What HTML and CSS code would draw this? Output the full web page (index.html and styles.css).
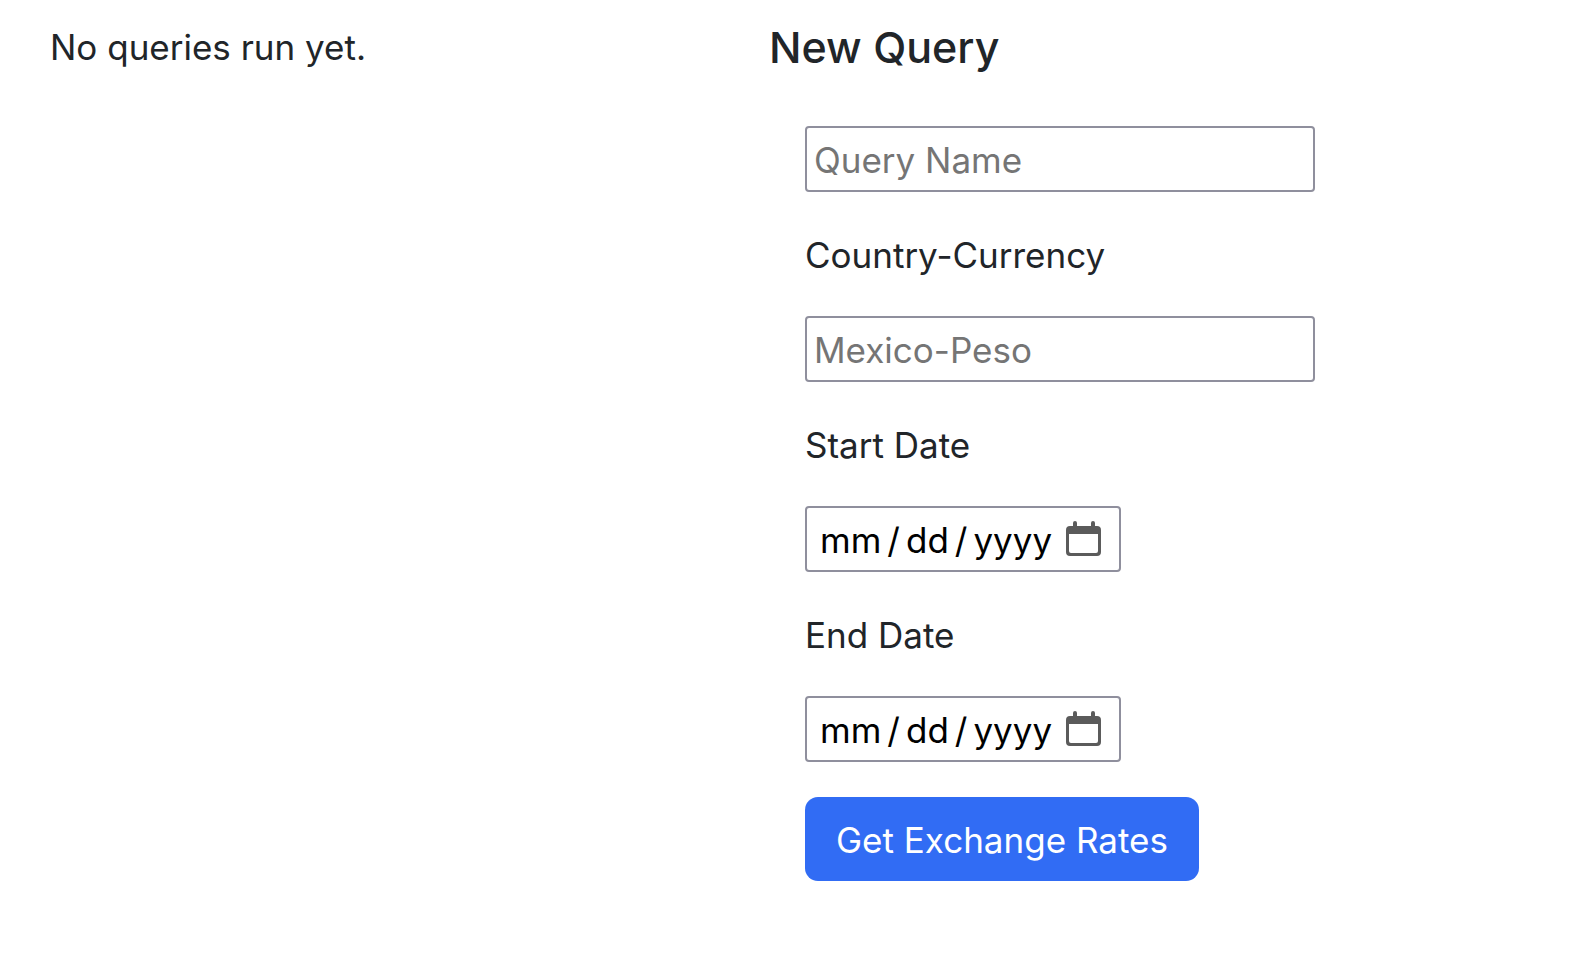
FILE: index.html
```html
<!DOCTYPE html>
<html lang="en-US">
<head>
  <meta charset="utf-8">
  <title>Exchange Rates</title>
  <link rel="stylesheet" href="styles.css">
</head>
<body>
  <main class="page">
    <section class="history">
      <p class="history-empty">No queries run yet.</p>
    </section>
    <section class="query">
      <h1 class="query-title">New Query</h1>
      <form class="query-form">
        <input class="field" type="text" name="name" placeholder="Query Name" aria-label="Query Name">
        <label class="label" for="currency">Country-Currency</label>
        <input class="field" id="currency" type="text" name="currency" placeholder="Mexico-Peso">
        <label class="label" for="start">Start Date</label>
        <div class="date">
          <input class="date-input" id="start" type="date" name="start">
          <svg class="date-icon" viewBox="0 0 35 35" aria-hidden="true">
            <path fill="#5b5b5b" fill-rule="evenodd" d="M7 2a2 2 0 0 1 4 0v3h14V2a2 2 0 0 1 4 0v3h2a4 4 0 0 1 4 4v22a4 4 0 0 1-4 4H4a4 4 0 0 1-4-4V9a4 4 0 0 1 4-4h3zM3 13v17a2 2 0 0 0 2 2h25a2 2 0 0 0 2-2V13z"/>
          </svg>
        </div>
        <label class="label" for="end">End Date</label>
        <div class="date">
          <input class="date-input" id="end" type="date" name="end">
          <svg class="date-icon" viewBox="0 0 35 35" aria-hidden="true">
            <path fill="#5b5b5b" fill-rule="evenodd" d="M7 2a2 2 0 0 1 4 0v3h14V2a2 2 0 0 1 4 0v3h2a4 4 0 0 1 4 4v22a4 4 0 0 1-4 4H4a4 4 0 0 1-4-4V9a4 4 0 0 1 4-4h3zM3 13v17a2 2 0 0 0 2 2h25a2 2 0 0 0 2-2V13z"/>
          </svg>
        </div>
        <button class="submit" type="button">Get Exchange Rates</button>
      </form>
    </section>
  </main>
</body>
</html>
```

FILE: styles.css
```css
* {
  box-sizing: border-box;
}

body {
  margin: 0;
  background: #fff;
  color: #212529;
  font-family: Inter, "Liberation Sans", sans-serif;
  font-size: 35px;
  line-height: 52px;
}

.page {
  display: grid;
  grid-template-columns: 1fr 1fr;
  padding: 21px 102px 48px 50px;
}

.history-empty {
  margin: 0;
}

.query-title {
  margin: 0 0 53px;
  font-size: 43px;
  font-weight: 500;
  line-height: 52px;
}

.query-form {
  display: flex;
  flex-direction: column;
  align-items: flex-start;
  gap: 35px;
  padding-left: 36px;
}

.label {
  padding-top: 2px;
}

.field,
.date {
  border: 2px solid #8f8f9d;
  border-radius: 4px;
  background: #fff;
}

.field {
  width: 100%;
  max-width: 510px;
  height: 66px;
  padding: 2px 7px 0;
  color: #000;
  font: inherit;
}

.field::placeholder {
  color: #757575;
  opacity: 1;
}

.date {
  display: flex;
  align-items: center;
  width: 316px;
  height: 66px;
  padding: 2px 18px 0 13px;
}

.date-input {
  flex: 1;
  min-width: 0;
  padding: 0;
  border: 0;
  background: none;
  color: #000;
  font: inherit;
}

.date-input::-webkit-datetime-edit,
.date-input::-webkit-datetime-edit-month-field,
.date-input::-webkit-datetime-edit-day-field,
.date-input::-webkit-datetime-edit-year-field {
  padding: 0;
}

.date-input::-webkit-datetime-edit-text {
  padding: 0 6px;
}

.date-input::-webkit-calendar-picker-indicator {
  display: none;
}

.date-icon {
  flex: none;
  width: 35px;
  height: 35px;
  margin-bottom: 4px;
}

.submit {
  padding: 17px 31px 15px;
  border: 0;
  border-radius: 13px;
  background: #316cf4;
  color: #fff;
  font: inherit;
}
```
